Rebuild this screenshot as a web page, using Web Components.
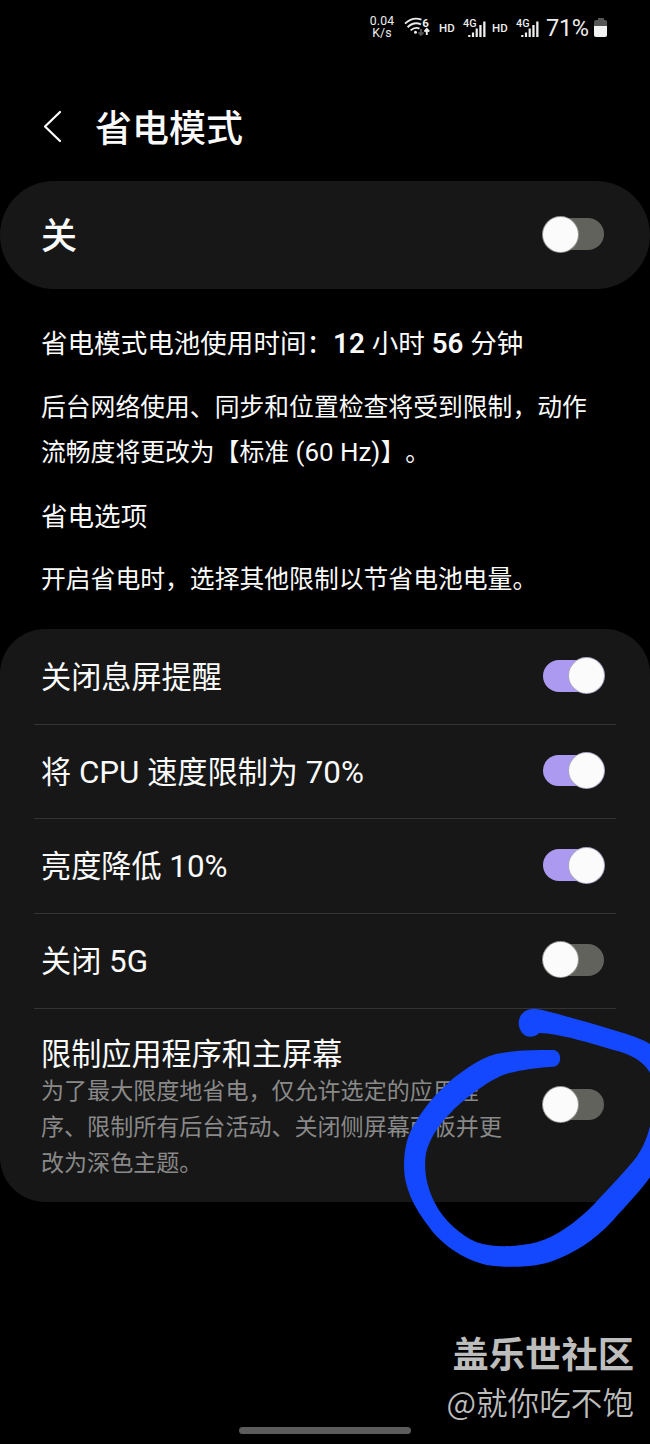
<!DOCTYPE html>
<html lang="zh-CN">
<head>
<meta charset="utf-8">
<title>省电模式</title>
<style>
html,body{margin:0;background:#000}
body{font-family:Roboto,"Noto Sans CJK SC",sans-serif;color:#fafafa;text-spacing-trim:space-all}
</style>
</head>
<body>
<power-page></power-page>
<script>
const define = (name, html, setup) => customElements.define(name, class extends HTMLElement {
  constructor() {
    super();
    this.attachShadow({ mode: 'open' }).innerHTML = html;
  }
  connectedCallback() { if (setup) setup(this, this.shadowRoot); }
});

define('signal-icon', `
<style>:host{display:block;width:24px;height:26px}svg{display:block}text{font:500 11px Roboto,sans-serif}</style>
<svg width="24" height="26" viewBox="0 0 24 26" fill="#eee">
<text x="0" y="11.6" textLength="13.5" lengthAdjust="spacingAndGlyphs">4G</text>
<path d="M5.2 20h2.2v2H5.2zM8.900 17.500h2.2V22H8.900zM12.600 13.500h2.2V22h-2.200zM16.300 10h2.300v12h-2.300zM20.200 6.500h2.300V22h-2.300z"/>
</svg>`);

define('wifi-icon', `
<style>:host{display:block;width:26px;height:22px}svg{display:block}text{font:700 11.5px Roboto,sans-serif}</style>
<svg width="26" height="22" viewBox="0 0 26 22" fill="none" stroke="#eee" stroke-width="1.9">
<path d="M1 6.6Q8.5-.6 17.5 2.6M3.6 10.2Q10 4.2 17 7.4M6.6 13.4Q11 9.6 15.5 11.6"/>
<circle cx="11.5" cy="15.3" r="1.5" fill="#eee" stroke="none"/>
<path d="M17 12v6m-2.5-2.6L17 18l2.5-2.6" stroke="#555"/>
<path d="M22.8 18v-6m-2.4 2.6 2.4-2.6 2.4 2.6"/>
<text x="18.3" y="9.8" fill="#eee" stroke="none">6</text>
</svg>`);

define('status-bar', `
<style>
:host{display:flex;height:56px;box-sizing:border-box;padding:0 42px 0 368px;align-items:center;color:#eee}
.rate{width:28px;text-align:center;font-size:12.200px;line-height:11.8px;letter-spacing:.15px;flex:none}
wifi-icon{margin-left:8px;flex:none}
.hd{width:17px;margin-left:9px;font-size:11.500px;font-weight:500;flex:none}
signal-icon{margin-left:7px;flex:none}
.hd.b{margin-left:5px}
.pct{width:45px;margin-left:6px;font-size:23.500px;letter-spacing:-.3px;flex:none}
.bat{display:block;margin-left:3px;flex:none}
</style>
<div class="rate">0.04<br>K/s</div><wifi-icon></wifi-icon>
<div class="hd">HD</div><signal-icon></signal-icon>
<div class="hd b">HD</div><signal-icon></signal-icon>
<div class="pct">71%</div>
<svg class="bat" width="14" height="20" viewBox="0 0 14 20"><path d="M4 0h6v2h1.5Q13 2 13 4V8H0V4Q0 2 2 2h2z" fill="#555"/><path d="M0 8h13v9q0 2-2 2H2q-2 0-2-2z" fill="#f2f2f2"/></svg>`);

define('toggle-switch', `
<style>
:host{display:flex;align-items:center;width:61px;height:31.500px;border-radius:16px;background:#62625c;flex:none}
:host([on]){background:#ac9af0;justify-content:flex-end}
i{display:block;width:35px;height:35px;border-radius:50%;background:#fbfbfb;flex:none;margin-left:-.5px;box-shadow:0 0 0 1px #93938f}
:host([on]) i{margin:0;box-shadow:0 0 0 1px #aaa5c4}
</style><i></i>`);

define('page-header', `
<style>
:host{display:flex;height:125px;box-sizing:border-box;padding:0 0 0 42px;align-items:flex-start}
svg{display:block;margin-top:53px;width:22px;height:34px}
h1{margin:47px 0 0 31px;font-size:37px;line-height:54px;font-weight:500}
</style>
<svg viewBox="0 0 22 34" fill="none" stroke="#fafafa" stroke-width="2.3" stroke-linecap="round" stroke-linejoin="round"><path d="M18 3 3 17.500 18 32"/></svg>
<h1><slot></slot></h1>`);

define('master-switch', `
<style>
:host{display:flex;height:108px;box-sizing:border-box;padding:0 46px 0 41px;border-radius:54px;background:#171717;align-items:center;justify-content:space-between}
b{font-size:36px;font-weight:500;line-height:54px;padding-top:4px}
toggle-switch{margin-bottom:2px}
</style><b><slot></slot></b><toggle-switch></toggle-switch>`);

define('info-text', `
<style>
:host{display:block;height:340px;box-sizing:border-box;padding:32px 41px 0}
p{margin:0;font-size:24.82px;line-height:45.500px;white-space:nowrap}
.l{font-size:26.55px}
p+p{margin-top:18px}
b{font-weight:600}
.n{font-size:1.045em;line-height:0}
</style>
<p class="l">省电模式电池使用时间：<span class="n"><b>12</b> </span>小时<span class="n"> <b>56</b> </span>分钟</p>
<p>后台网络使用、同步和位置检查将受到限制，动作<br>流畅度将更改为【标准<span class="n"> (60 Hz)</span>】。</p>
<p class="l">省电选项</p>
<p>开启省电时，选择其他限制以节省电池电量。</p>`);

define('option-row', `
<style>
:host{display:flex;height:94.700px;box-sizing:border-box;margin:0 34px;padding:0 12px 0 7px;align-items:center;justify-content:space-between;border-bottom:1.500px solid #333}
:host([last]){height:193px;border:0;align-items:flex-start;padding-top:22px}
.t{font-size:30.150px;line-height:44px;white-space:nowrap;padding-top:2px}
.s{font-size:23.050px;line-height:36px;color:#898989;white-space:nowrap;margin-top:-3px}
toggle-switch{margin-bottom:2px}
:host([last]) toggle-switch{margin-top:58px}
</style>
<div><div class="t"><slot></slot></div><div class="s"><slot name="sub"></slot></div></div><toggle-switch></toggle-switch>`,
(el, root) => {
  if (el.hasAttribute('on')) root.querySelector('toggle-switch').setAttribute('on', '');
  if (!el.hasAttribute('last')) root.querySelector('.s').remove();
});

define('option-card', `
<style>:host{display:block;height:572.500px;box-sizing:border-box;border-radius:45px;background:#171717;padding-top:1px}</style><slot></slot>`);

define('pen-mark', `
<style>:host{display:block;position:absolute;left:0;top:0;width:650px;height:1444px;pointer-events:none}svg{display:block}</style>
<svg width="650" height="1444" viewBox="0 0 650 1444"><path transform="translate(380 990) scale(.33333)" fill="#1448ff" d="M416 100C416 75 435 55 465 56C500 60 650 105 700 120C750 135 785 145 815 165C860 200 870 280 870 330C870 400 840 520 810 562C780 605 740 645 700 690C640 755 580 790 520 812C470 832 380 835 320 825C260 812 190 770 150 715C100 650 72 590 72 530C72 470 85 430 105 400C140 340 180 300 220 265C260 235 310 195 370 188C420 180 470 180 520 180C547 182 547 226 522 230C480 232 420 240 385 250C330 265 250 330 215 365C180 400 150 440 138 490C130 540 140 590 165 640C190 690 240 735 290 757C340 775 420 770 470 757C530 740 590 695 640 645C690 590 740 540 770 500C795 465 805 430 812 400C822 340 820 270 808 245C790 215 750 190 700 180C640 162 540 130 478 129C470 138 455 142 440 139C425 132 416 115 416 100Z"/></svg>`);

define('community-credit', `
<style>
:host{display:block;height:225.500px;box-sizing:border-box;padding:128px 16px 0 0;text-align:right;color:#bdbdbd;white-space:nowrap}
b{display:block;font-size:36.300px;line-height:52px;font-weight:700}
span{display:block;font-family:"Noto Sans CJK SC",sans-serif;font-size:31.600px;line-height:44px;font-weight:350;margin-top:-3px}
</style><b>盖乐世社区</b><span>@就你吃不饱</span>`);

define('nav-handle', `
<style>:host{display:block;width:172px;height:7px;border-radius:4px;background:#5c5c5c;margin-left:239px}</style>`);

define('power-page', `
<style>:host{display:block;position:relative;width:650px;height:1444px;overflow:hidden;background:#000}.n{font-size:1.04em;line-height:0}</style>
<status-bar></status-bar>
<page-header>省电模式</page-header>
<master-switch>关</master-switch>
<info-text></info-text>
<option-card>
<option-row on>关闭息屏提醒</option-row>
<option-row on>将<span class="n"> CPU </span>速度限制为<span class="n"> 70%</span></option-row>
<option-row on>亮度降低<span class="n"> 10%</span></option-row>
<option-row>关闭<span class="n"> 5G</span></option-row>
<option-row last>限制应用程序和主屏幕<span slot="sub">为了最大限度地省电，仅允许选定的应用程<br>序、限制所有后台活动、关闭侧屏幕面板并更<br>改为深色主题。</span></option-row>
</option-card>
<community-credit></community-credit>
<nav-handle></nav-handle>
<pen-mark></pen-mark>`);
</script>
</body>
</html>
